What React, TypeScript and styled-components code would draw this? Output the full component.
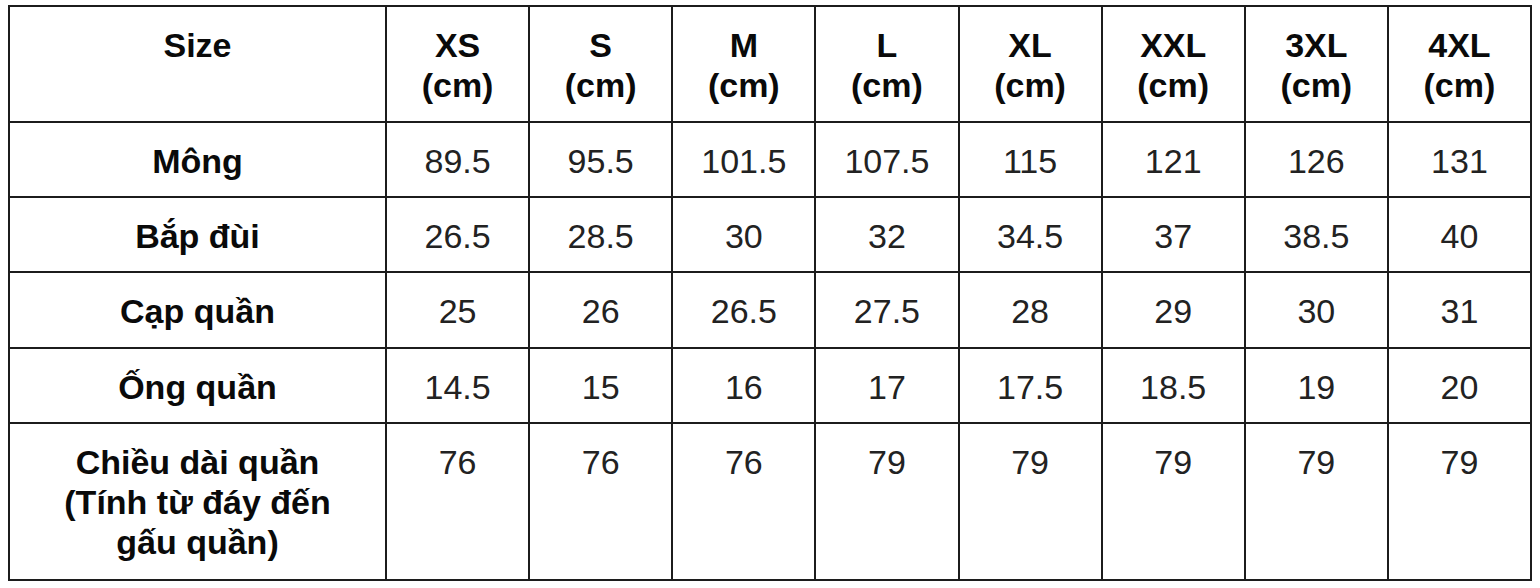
import styled, { createGlobalStyle } from "styled-components";

const GlobalStyle = createGlobalStyle`
  html, body {
    margin: 0;
    padding: 0;
    background: #ffffff;
  }
  body {
    font-family: "Liberation Sans", Arial, sans-serif;
  }
`;

const Page = styled.div`
  padding: 5px 0 0 8px;
`;

const SizeTable = styled.table`
  width: 1524px;
  border-collapse: collapse;
  table-layout: fixed;
  color: #111;
  font-size: 34px;
  line-height: 40px;
`;

const Row = styled.tr<{ $height: number }>`
  height: ${(p) => p.$height}px;
`;

const Cell = styled.td<{ $bold?: boolean }>`
  border: 2px solid #1c1c1c;
  padding: 18px 4px 0;
  vertical-align: top;
  text-align: center;
  font-weight: ${(p) => (p.$bold ? 700 : 400)};
  color: ${(p) => (p.$bold ? "#0a0a0a" : "#222")};
`;

const sizes = ["XS", "S", "M", "L", "XL", "XXL", "3XL", "4XL"];

const rows: { label: string[]; values: string[]; height: number }[] = [
  { label: ["Mông"], values: ["89.5", "95.5", "101.5", "107.5", "115", "121", "126", "131"], height: 75 },
  { label: ["Bắp đùi"], values: ["26.5", "28.5", "30", "32", "34.5", "37", "38.5", "40"], height: 75 },
  { label: ["Cạp quần"], values: ["25", "26", "26.5", "27.5", "28", "29", "30", "31"], height: 76 },
  { label: ["Ống quần"], values: ["14.5", "15", "16", "17", "17.5", "18.5", "19", "20"], height: 75 },
  {
    label: ["Chiều dài quần", "(Tính từ đáy đến", "gấu quần)"],
    values: ["76", "76", "76", "79", "79", "79", "79", "79"],
    height: 157,
  },
];

export default function App() {
  return (
    <>
      <GlobalStyle />
      <Page>
        <SizeTable>
          <colgroup>
            <col style={{ width: 377 }} />
            {sizes.map((s) => (
              <col key={s} />
            ))}
          </colgroup>
          <tbody>
            <Row $height={116}>
              <Cell $bold>Size</Cell>
              {sizes.map((s) => (
                <Cell $bold key={s}>
                  {s}
                  <br />
                  (cm)
                </Cell>
              ))}
            </Row>
            {rows.map((r) => (
              <Row $height={r.height} key={r.label[0]}>
                <Cell $bold>
                  {r.label.map((line, i) => (
                    <span key={i}>
                      {i > 0 && <br />}
                      {line}
                    </span>
                  ))}
                </Cell>
                {r.values.map((v, i) => (
                  <Cell key={i}>{v}</Cell>
                ))}
              </Row>
            ))}
          </tbody>
        </SizeTable>
      </Page>
    </>
  );
}
